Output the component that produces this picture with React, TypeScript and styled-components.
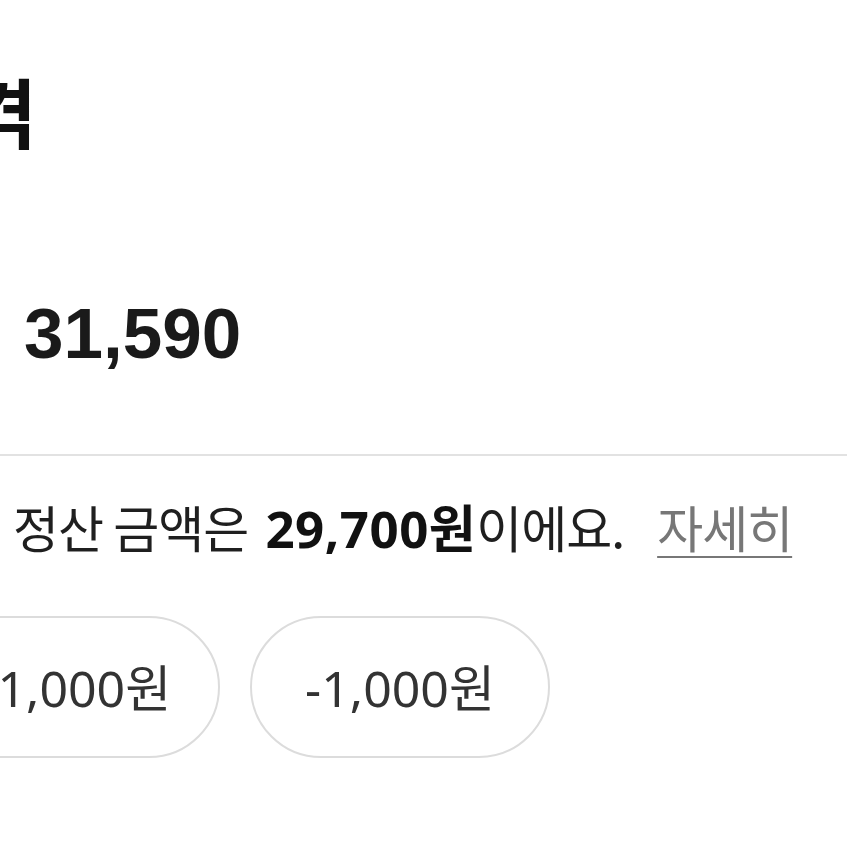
import React from 'react';
import styled, { createGlobalStyle } from 'styled-components';

const GlobalStyle = createGlobalStyle`
  html, body {
    margin: 0;
    padding: 0;
    background: #ffffff;
  }
  body {
    font-family: "Noto Sans CJK KR", "Noto Sans", sans-serif;
  }
`;

const Page = styled.div`
  width: 847px;
  height: 847px;
  overflow: hidden;
  background: #ffffff;
  display: flex;
  flex-direction: column;
`;

// the screen is cropped on the left: the title overflows out of a narrow box
const TitleBox = styled.div`
  margin-top: 72px;
  width: 37px;
  display: flex;
  justify-content: flex-end;
`;

const Title = styled.h1`
  margin: 0;
  flex-shrink: 0;
  font-size: 76px;
  line-height: 1;
  font-weight: 700;
  color: #111111;
  white-space: nowrap;
`;

const PriceRow = styled.div`
  margin-top: 150px;
  padding-left: 24px;
  display: flex;
  align-items: baseline;
`;

const Price = styled.span`
  font-family: "Liberation Sans", Arial, sans-serif;
  font-size: 71px;
  font-weight: 700;
  color: #1a1a1a;
  line-height: 1;
`;

const Divider = styled.hr`
  margin: 85px 0 0 0;
  border: none;
  height: 2px;
  background: #e2e2e2;
`;

const Notice = styled.p`
  margin: 40px 0 0 13px;
  font-size: 50px;
  line-height: 1.2;
  color: #1f1f1f;
  white-space: nowrap;
  letter-spacing: -1px;
`;

const Strong = styled.strong`
  margin-left: 7px;
  font-family: "Noto Sans", "Noto Sans CJK KR", sans-serif;
  font-size: 51px;
  font-weight: 700;
  color: #111111;
  letter-spacing: 0.5px;
`;

const More = styled.a`
  margin-left: 33px;
  color: #777777;
  text-decoration: underline;
  text-decoration-thickness: 2px;
  text-underline-offset: 8px;
`;

const Chips = styled.div`
  margin-top: 57px;
  width: 220px;
  display: flex;
  justify-content: flex-end;
  gap: 30px;
`;

const Chip = styled.button`
  width: 300px;
  height: 142px;
  border-radius: 71px;
  border: 2px solid #dcdcdc;
  background: #ffffff;
  font-family: "Noto Sans", "Noto Sans CJK KR", sans-serif;
  font-size: 50px;
  color: #333333;
  display: flex;
  align-items: center;
  justify-content: center;
  padding: 0 0 4px;
  flex-shrink: 0;
`;

// second chip sits to the right of the clipped first one
const ChipRight = styled(Chip)`
  margin-right: -330px;
`;

export default function App() {
  return (
    <Page>
      <GlobalStyle />
      <TitleBox>
        <Title>판매가격</Title>
      </TitleBox>
      <PriceRow>
        <Price>31,590</Price>
      </PriceRow>
      <Divider />
      <Notice>
        정산 금액은 <Strong>29,700원</Strong>이에요.<More>자세히</More>
      </Notice>
      <Chips>
        <Chip>+1,000원</Chip>
        <ChipRight>-1,000원</ChipRight>
      </Chips>
    </Page>
  );
}
